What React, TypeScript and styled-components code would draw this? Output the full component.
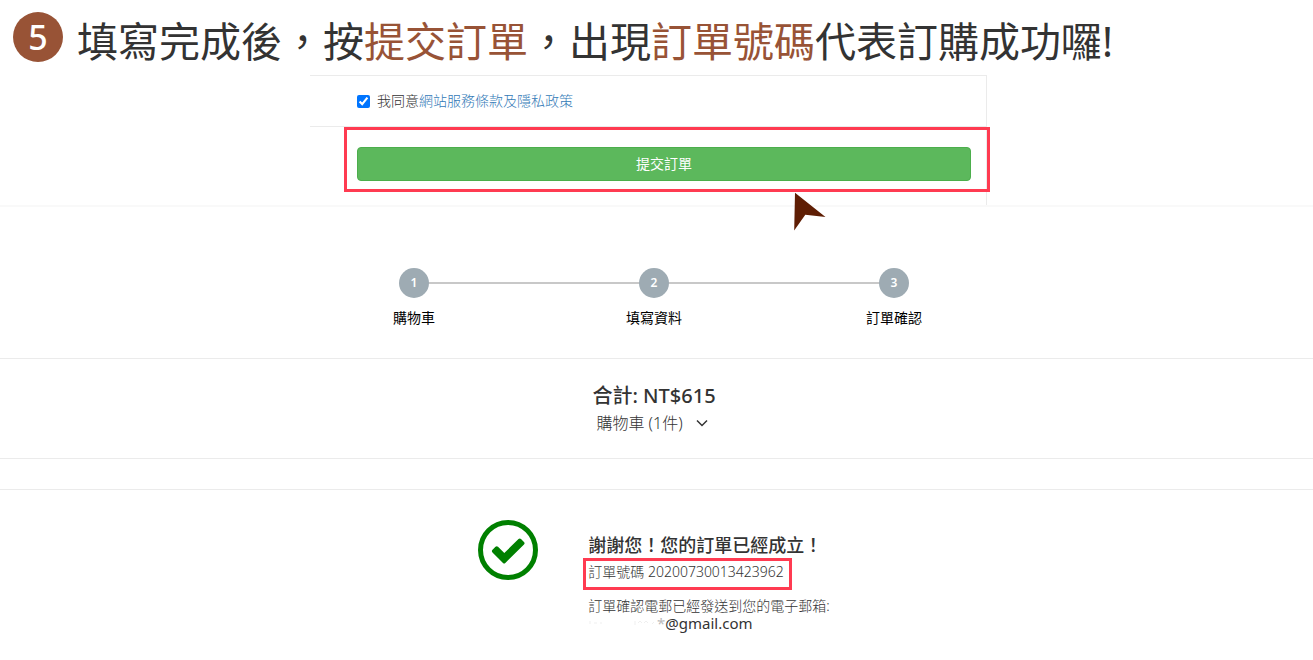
import React from "react";
import styled, { createGlobalStyle } from "styled-components";

const GlobalStyle = createGlobalStyle`
  * { box-sizing: border-box; }
  body {
    margin: 0;
    background: #fff;
    color: #333;
    font-family: "Noto Sans", "Noto Sans CJK TC", sans-serif;
    font-size: 14px;
    line-height: 20px;
  }
  h1, h2, p, ol { margin: 0; padding: 0; }
`;

const Header = styled.header`
  display: flex;
  align-items: flex-start;
  gap: 14px;
  padding: 12px 13px 5px;
`;

const StepBadge = styled.span`
  display: flex;
  align-items: center;
  justify-content: center;
  flex: none;
  width: 50px;
  height: 50px;
  border-radius: 50%;
  background: #985336;
  color: #fff;
  font-size: 34px;
  font-weight: 500;
  line-height: 50px;
`;

const Title = styled.h1`
  font-size: 41px;
  line-height: 58px;
  font-weight: 400;
  white-space: nowrap;
  color: #333;
`;

const Accent = styled.span`
  color: #985336;
`;

const FormArea = styled.section`
  display: flex;
  justify-content: center;
  padding-right: 16px;
  border-bottom: 2px solid #f9f9f9;
`;

const FormCard = styled.form`
  flex: 0 1 677px;
  border: 1px solid #ebebeb;
  border-width: 1px 1px 0 0;
`;

const AgreeRow = styled.div`
  display: flex;
  align-items: center;
  gap: 7px;
  padding: 15px 15px 15px 47px;
  border-bottom: 1px solid #ebebeb;
  font-weight: 300;
`;

const Checkbox = styled.input`
  width: 13px;
  height: 13px;
  margin: 0;
  accent-color: #0075ff;
`;

const TextLink = styled.a`
  color: #337ab7;
  text-decoration: none;
`;

const SubmitRow = styled.div`
  position: relative;
  padding: 20px 15px 24px 47px;
`;

const SubmitButton = styled.button`
  display: block;
  width: 100%;
  height: 34px;
  border: 1px solid #4cae4c;
  border-radius: 4px;
  background: #5cb85c;
  color: #fff;
  font: inherit;
  cursor: pointer;
`;

const SubmitHighlight = styled.div`
  position: absolute;
  top: 0;
  left: 34px;
  right: -4px;
  height: 65px;
  border: 3px solid #ff3b51;
  pointer-events: none;
`;

const Pointer = styled.svg`
  position: absolute;
  top: 65px;
  right: 160px;
  width: 33px;
  height: 40px;
  pointer-events: none;
`;

const Section = styled.section`
  display: flex;
  flex-direction: column;
  align-items: center;
  padding: 0 5px 0 0;
`;

const StepSection = styled(Section)`
  padding-top: 61px;
  padding-bottom: 30px;
  border-bottom: 1px solid #ebebeb;
`;

const Steps = styled.ol`
  display: grid;
  grid-template-columns: repeat(3, 1fr);
  width: 100%;
  max-width: 720px;
  list-style: none;
`;

const Step = styled.li`
  position: relative;
  display: flex;
  flex-direction: column;
  align-items: center;
  gap: 10px;
  color: #000;

  & + &::before {
    content: "";
    position: absolute;
    top: 14px;
    left: -50%;
    width: 100%;
    height: 2px;
    background: #c8c8c8;
  }
`;

const StepNumber = styled.span`
  position: relative;
  z-index: 1;
  width: 30px;
  height: 30px;
  border-radius: 50%;
  background: #9eabb3;
  color: #fff;
  font-size: 12px;
  font-weight: 600;
  line-height: 30px;
  text-align: center;
`;

const SummarySection = styled(Section)`
  padding-top: 22px;
  padding-bottom: 23px;
  border-bottom: 1px solid #ebebeb;
`;

const Total = styled.h2`
  font-size: 20px;
  line-height: 30px;
  font-weight: 500;
`;

const CartToggle = styled.button`
  display: flex;
  align-items: center;
  gap: 13px;
  padding: 0 4px 0 0;
  border: 0;
  background: none;
  color: inherit;
  font: inherit;
  font-size: 16px;
  font-weight: 300;
  line-height: 24px;
  cursor: pointer;
`;

const ResultSection = styled(Section)`
  margin-top: 30px;
  padding-top: 30px;
  padding-bottom: 24px;
  border-top: 1px solid #ebebeb;
`;

const Result = styled.div`
  display: flex;
  align-items: flex-start;
  gap: 50px;
`;

const ResultText = styled.div`
  padding-top: 12px;
`;

const ResultTitle = styled.h2`
  font-size: 18px;
  line-height: 26px;
  font-weight: 500;
`;

const OrderNumber = styled.p`
  width: max-content;
  margin: 0 0 7px -5px;
  padding: 1px 5px 5px 2px;
  border: 3px solid #ff3b51;
  font-weight: 300;
`;

const MailLine = styled.p`
  line-height: 18px;
  font-weight: 300;
`;

const MailAddress = styled.p`
  display: flex;
  font-size: 15px;
  line-height: 16px;
`;

const MaskedName = styled.span`
  display: flex;
  align-items: center;
  justify-content: space-between;
  width: 77px;
  color: #bbb;
`;

export default function App() {
  return (
    <>
      <GlobalStyle />
      <Header>
        <StepBadge>5</StepBadge>
        <Title>
          填寫完成後，按<Accent>提交訂單</Accent>，出現<Accent>訂單號碼</Accent>代表訂購成功囉!
        </Title>
      </Header>
      <main>
        <FormArea>
          <FormCard onSubmit={(e) => e.preventDefault()}>
            <AgreeRow>
              <Checkbox type="checkbox" id="agree" defaultChecked />
              <label htmlFor="agree">
                我同意<TextLink href="#terms">網站服務條款及隱私政策</TextLink>
              </label>
            </AgreeRow>
            <SubmitRow>
              <SubmitButton type="submit">提交訂單</SubmitButton>
              <SubmitHighlight />
              <Pointer viewBox="0 0 33 40" aria-hidden="true">
                <path d="M2 0.700 L32.500 25 L12.300 22.700 L1.200 38.500 Z" fill="#5f1e04" />
              </Pointer>
            </SubmitRow>
          </FormCard>
        </FormArea>
        <StepSection>
          <Steps>
            <Step>
              <StepNumber>1</StepNumber>
              購物車
            </Step>
            <Step>
              <StepNumber>2</StepNumber>
              填寫資料
            </Step>
            <Step>
              <StepNumber>3</StepNumber>
              訂單確認
            </Step>
          </Steps>
        </StepSection>
        <SummarySection>
          <Total>合計: NT$615</Total>
          <CartToggle type="button">
            購物車 (1件)
            <svg width="12" height="8" viewBox="0 0 12 8" aria-hidden="true">
              <path d="M1 1.500 L6 6.500 L11 1.500" fill="none" stroke="#333" strokeWidth="1.500" />
            </svg>
          </CartToggle>
        </SummarySection>
        <ResultSection>
          <Result>
            <svg width="60" height="60" viewBox="0 0 60 60" aria-hidden="true">
              <circle cx="30" cy="30" r="27.500" fill="none" stroke="#008000" strokeWidth="5" />
              <path
                d="M14.500 29.800 L17.500 26.800 Q18.700 25.600 20 26.800 L26.300 33 L40.500 19 Q41.800 17.800 43 19 L46 22 Q47.200 23.300 46 24.500 L27.300 43 Q26.200 44 25 43 L14.500 32.400 Q13.200 31.100 14.500 29.800 Z"
                fill="#008000"
              />
            </svg>
            <ResultText>
              <ResultTitle>謝謝您！您的訂單已經成立！</ResultTitle>
              <OrderNumber>訂單號碼 20200730013423962</OrderNumber>
              <MailLine>訂單確認電郵已經發送到您的電子郵箱:</MailLine>
              <MailAddress>
                <MaskedName>
                  <svg width="68" height="8" viewBox="0 0 68 8" aria-hidden="true">
                    <path
                      d="M2 2 V5 M6 4 H9 M12 4 H14 M47 2 V6 M50 4 L52 2 L54 4 M56 4 L58 2 L60 4 M64 5 L66 3"
                      fill="none"
                      stroke="#efefef"
                    />
                  </svg>
                  <span>*</span>
                </MaskedName>
                @gmail.com
              </MailAddress>
            </ResultText>
          </Result>
        </ResultSection>
      </main>
    </>
  );
}
